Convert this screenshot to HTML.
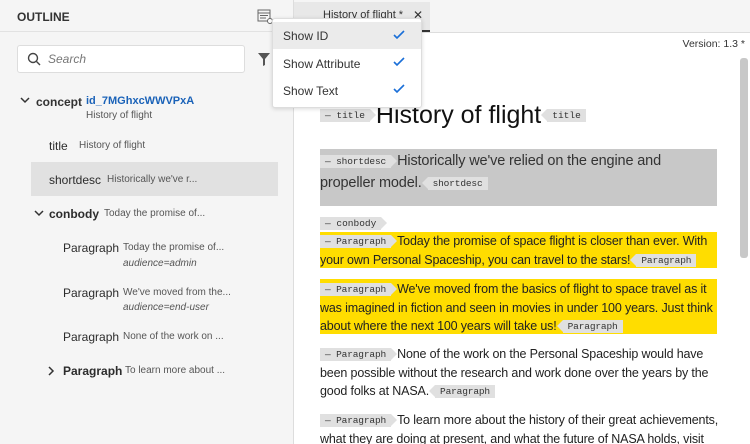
<!DOCTYPE html><html style="height:444px;overflow:hidden"><head><style>
body{margin:0;width:750px;height:444px;overflow:hidden;font-family:"Liberation Sans",sans-serif;background:#fff;position:relative}
.a{position:absolute}
#left{left:0;top:0;width:293px;height:444px;background:#f5f5f5;border-right:1px solid #ddd}
.t{font-size:12px;color:#2c2c2c;white-space:nowrap}
.s{font-size:10px;color:#555;white-space:nowrap}
.tag{display:inline-block;background:#e0e0e0;font-family:"Liberation Mono",monospace;font-size:9.5px;color:#333;padding:0 5px;line-height:13px;vertical-align:middle;position:relative;white-space:nowrap}
.tag.o{margin-right:6px}
.tag.c{margin-left:6px}
.tag.o:after{content:"";position:absolute;right:-6px;top:0;border-left:6px solid #e0e0e0;border-top:6.5px solid transparent;border-bottom:6.5px solid transparent}
.tag.c:before{content:"";position:absolute;left:-6px;top:0;border-right:6px solid #e0e0e0;border-top:6.5px solid transparent;border-bottom:6.5px solid transparent}
.p{left:320px;width:402px;font-size:12.5px;line-height:18.5px;color:#222;letter-spacing:-0.15px}
</style></head><body>
<div id="left" class="a">
<div class="a" style="left:0;top:0;width:293px;height:31px;border-bottom:1px solid #e2e2e2"></div>
<div class="a t" style="left:17px;top:10px;font-size:12px;font-weight:bold;color:#333">OUTLINE</div>
<svg class="a" style="left:257px;top:9px" width="16" height="15" viewBox="0 0 16 15"><rect x="1" y="1" width="12" height="11" fill="none" stroke="#666"/><path d="M1 4h12M3 6.5h8M3 9h6" stroke="#666"/><circle cx="13" cy="12" r="2.5" fill="#fff" stroke="#666"/></svg>
<div class="a" style="left:17px;top:45px;width:226px;height:26px;background:#fff;border:1px solid #ddd;border-radius:3px"></div>
<svg class="a" style="left:27px;top:52px" width="14" height="14"><circle cx="6" cy="6" r="4.5" fill="none" stroke="#444" stroke-width="1.4"/><path d="M9.5 9.5L13 13" stroke="#444" stroke-width="1.4"/></svg>
<div class="a" style="left:48px;top:52px;font-size:12px;color:#777;font-style:italic">Search</div>
<svg class="a" style="left:258px;top:53px" width="12" height="13"><path d="M0 0h12L7 6v6L5 13V6z" fill="#555"/></svg>
<svg class="a" style="left:20px;top:97px" width="10" height="7"><path d="M1 1l4 4l4-4" fill="none" stroke="#333" stroke-width="1.5"/></svg>
<div class="a t" style="left:36px;top:95px;font-weight:bold;color:#333">concept</div>
<div class="a" style="left:86px;top:95px;font-size:11px;color:#1a62b8;font-weight:bold">id_7MGhxcWWVPxA</div>
<div class="a s" style="left:86px;top:110px">History of flight</div>
<div class="a t" style="left:49px;top:139px">title</div><div class="a s" style="left:79px;top:140px">History of flight</div>
<div class="a" style="left:31px;top:162px;width:247px;height:34px;background:#e1e1e1"></div>
<div class="a t" style="left:49px;top:173px">shortdesc</div><div class="a s" style="left:107px;top:174px">Historically we've r...</div>
<svg class="a" style="left:34px;top:210px" width="10" height="7"><path d="M1 1l4 4l4-4" fill="none" stroke="#333" stroke-width="1.5"/></svg>
<div class="a t" style="left:49px;top:207px;font-weight:bold">conbody</div><div class="a s" style="left:104px;top:208px">Today the promise of...</div>
<div class="a t" style="left:63px;top:241px">Paragraph</div><div class="a s" style="left:123px;top:242px">Today the promise of...</div><div class="a s" style="left:123px;top:258px;font-style:italic">audience=admin</div>
<div class="a t" style="left:63px;top:286px">Paragraph</div><div class="a s" style="left:123px;top:287px">We've moved from the...</div><div class="a s" style="left:123px;top:302px;font-style:italic">audience=end-user</div>
<div class="a t" style="left:63px;top:330px">Paragraph</div><div class="a s" style="left:123px;top:331px">None of the work on ...</div>
<svg class="a" style="left:48px;top:366px" width="7" height="10"><path d="M1 1l4 4l-4 4" fill="none" stroke="#333" stroke-width="1.5"/></svg>
<div class="a t" style="left:63px;top:364px;font-weight:bold">Paragraph</div><div class="a s" style="left:125px;top:365px">To learn more about ...</div>
</div>
<div class="a" style="left:294px;top:0;width:456px;height:32px;background:#f5f5f5;border-bottom:1px solid #ddd"></div>
<div class="a" style="left:294px;top:2px;width:136px;height:30px;background:#e8e8e8;border-bottom:2px solid #333;box-sizing:border-box"></div>
<div class="a" style="left:323px;top:9px;font-size:11px;color:#333;white-space:nowrap">History of flight *</div>
<div class="a" style="left:413px;top:8px;font-size:12px;color:#333">✕</div>
<div class="a" style="right:5px;top:38px;font-size:10.5px;color:#333;white-space:nowrap">Version: 1.3 *</div>
<div class="a" style="left:740px;top:58px;width:8px;height:200px;background:#c8c8c8;border-radius:3px"></div>
<div class="a" style="left:320px;top:101px;white-space:nowrap"><span class="tag o">— title</span><span style="font-size:25px;color:#111;vertical-align:middle">History of flight</span><span class="tag c">title</span></div>
<div class="a" style="left:320px;top:149px;width:397px;height:57px;background:#c8c8c8"></div>
<div class="a p" style="top:150px;font-size:14.5px;line-height:22px;color:#333;width:397px"><span class="tag o">— shortdesc</span>Historically we've relied on the engine and propeller model.<span class="tag c">shortdesc</span></div>
<div class="a" style="left:320px;top:215px"><span class="tag o">— conbody</span></div>
<div class="a" style="left:320px;top:232px;width:397px;height:36px;background:#ffdd00"></div>
<div class="a p" style="top:232px"><span class="tag o">— Paragraph</span>Today the promise of space flight is closer than ever. With your own Personal Spaceship, you can travel to the stars!<span class="tag c">Paragraph</span></div>
<div class="a" style="left:320px;top:279px;width:397px;height:55px;background:#ffdd00"></div>
<div class="a p" style="top:280px"><span class="tag o">— Paragraph</span>We've moved from the basics of flight to space travel as it was imagined in fiction and seen in movies in under 100 years. Just think about where the next 100 years will take us!<span class="tag c">Paragraph</span></div>
<div class="a p" style="top:345px"><span class="tag o">— Paragraph</span>None of the work on the Personal Spaceship would have been possible without the research and work done over the years by the good folks at NASA.<span class="tag c">Paragraph</span></div>
<div class="a p" style="top:411px;width:410px"><span class="tag o">— Paragraph</span>To learn more about the history of their great achievements, what they are doing at present, and what the future of NASA holds, visit</div>
<div class="a" style="left:272px;top:18px;width:148px;height:88px;background:#fff;border:1px solid #ddd;border-radius:3px;box-shadow:0 1px 4px rgba(0,0,0,.15)">
<div style="height:27px;background:#ebebeb;margin-top:3px"></div>
<div class="a" style="left:10px;top:10px;font-size:12px;color:#333">Show ID</div>
<div class="a" style="left:10px;top:38px;font-size:12px;color:#333">Show Attribute</div>
<div class="a" style="left:10px;top:65px;font-size:12px;color:#333">Show Text</div>
<svg class="a" style="left:120px;top:11px" width="12" height="70"><g fill="none" stroke="#1a6fd8" stroke-width="1.6"><path d="M1 5l3 3l7-7"/><path d="M1 32l3 3l7-7"/><path d="M1 59l3 3l7-7"/></g></svg>
</div>
</body></html>
